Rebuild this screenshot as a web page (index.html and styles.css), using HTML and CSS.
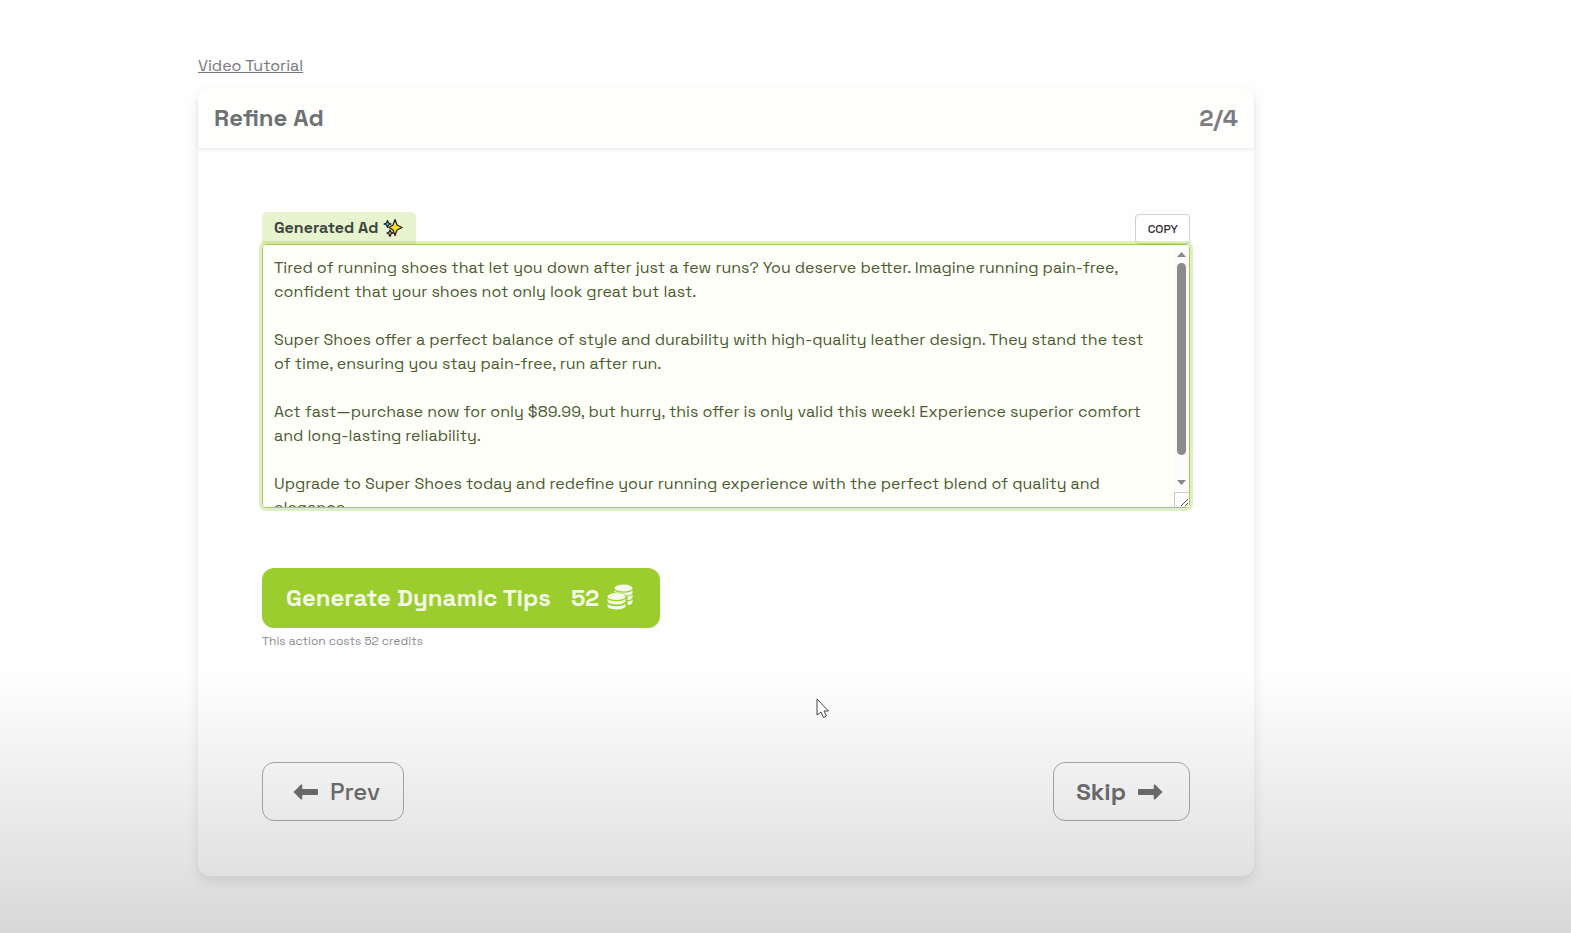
FILE: index.html
```
<!DOCTYPE html>
<html lang="en">
<head>
  <meta charset="UTF-8">
  <title>Refine Ad</title>
  <link rel="stylesheet" href="styles.css">
</head>
<body>
  <main class="page">
    <a href="#" class="tutorial-link">Video Tutorial</a>

    <section class="card">
      <header class="card-header">
        <h1>Refine Ad</h1>
        <span class="step">2/4</span>
      </header>

      <div class="card-body">
        <div class="field-top">
          <label for="generatedAd" class="field-label">
            Generated Ad
            <svg class="sparkles" viewBox="0 0 20 20" aria-hidden="true">
              <g stroke="#1c1c1c" stroke-width="1.2" stroke-linejoin="round">
                <path fill="#5fc8e8" d="M4.500 2.500l1 2.500 2.500 1-2.500 1-1 2.500-1-2.500-2.500-1 2.500-1z"/>
                <path fill="#e58fb5" d="M7 12l1 2 2 1-2 1-1 2.500-1-2.500-2-1 2-1z"/>
                <path fill="#ffe01b" d="M12 1.500l2 5.500 5 2.500-5 2.500-2 5.500-2-5.500-4-2.500 4-2.500z"/>
              </g>
            </svg>
          </label>
          <button type="button" class="copy-btn">COPY</button>
        </div>
        <div class="ad-box">
          <textarea id="generatedAd" class="ad-text" spellcheck="false">Tired of running shoes that let you down after just a few runs? You deserve better. Imagine running pain-free, confident that your shoes not only look great but last.

Super Shoes offer a perfect balance of style and durability with high-quality leather design. They stand the test of time, ensuring you stay pain-free, run after run.

Act fast—purchase now for only $89.99, but hurry, this offer is only valid this week! Experience superior comfort and long-lasting reliability.

Upgrade to Super Shoes today and redefine your running experience with the perfect blend of quality and elegance.
</textarea>
          <div class="scrollbar" aria-hidden="true">
            <svg class="scroll-arrow" viewBox="0 0 9 5"><path fill="#888" d="M0 5L4.500 0L9 5z"/></svg>
            <div class="scroll-track"><div class="scroll-thumb"></div></div>
            <svg class="scroll-arrow" viewBox="0 0 9 5"><path fill="#888" d="M0 0L4.500 5L9 0z"/></svg>
          </div>
        </div>

        <button type="button" class="generate-btn">
          <span>Generate Dynamic Tips</span>
          <span class="cost">52
            <svg class="coins" viewBox="0 0 26 26" aria-hidden="true">
              <g fill="currentColor">
                <ellipse cx="16.500" cy="4" rx="9" ry="3.600"/>
                <path d="M7.500 6.500c4 3 14 3 18 0v2c0 2-3 3-6 3-2-2-6-3-11-3-1 0-1-1-1-2z"/>
                <path d="M20.500 12.500c2 0 4-1 5-2v2.500c0 2-2 3-5 3zM20.500 17.500c2 0 4-1 5-2v2.500c0 2-2 3-5 3z"/>
                <ellipse cx="9.500" cy="12.500" rx="9" ry="3.600"/>
                <path d="M0.500 15c4 3 14 3 18 0v2c0 4.500-18 4.500-18 0zM0.500 20c4 3 14 3 18 0v2c0 4.500-18 4.500-18 0z"/>
              </g>
            </svg>
          </span>
        </button>
        <p class="hint">This action costs 52 credits</p>

        <div class="card-actions">
          <button type="button" class="nav-btn prev-btn">
            <svg class="arrow" viewBox="0 0 26 16" aria-hidden="true"><path fill="currentColor" d="M0.500 8L8 0.600Q9.300 0 9.300 1.500V5H23.500Q25 5 25 6.300V9.700Q25 11 23.500 11H9.300V14.500Q9.300 16 8 15.400Z"/></svg>
            Prev
          </button>
          <button type="button" class="nav-btn skip-btn">
            Skip
            <svg class="arrow" viewBox="0 0 26 16" aria-hidden="true"><path fill="currentColor" d="M25.500 8L18 0.600Q16.700 0 16.700 1.500V5H2.500Q1 5 1 6.300V9.700Q1 11 2.500 11H16.700V14.500Q16.700 16 18 15.400Z"/></svg>
          </button>
        </div>
      </div>
    </section>
  </main>

  <div class="bottom-fade"></div>
  <svg class="cursor" viewBox="0 0 14 21" aria-hidden="true">
    <path fill="#fff" stroke="#444" stroke-linejoin="round" d="M1 1v16l4-3 2.500 5.500 3-1.500-2.500-5h4.500z"/>
  </svg>
</body>
</html>
```
FILE: styles.css
```
* { box-sizing: border-box; }
body { margin: 0; min-height: 100vh; background-color: #fefefe; color: #707074; font-family: "Space Grotesk", Inter, "Liberation Sans", sans-serif; font-size: 16px; line-height: 24px; }
button { font-family: inherit; cursor: pointer; }

.page { padding: 54px 317px 56px 198px; }
.tutorial-link { display: inline-block; margin-bottom: 10px; color: #77777a; text-decoration: underline; }

.card { border-radius: 12px; background-color: #fefefe; box-shadow: 0 5px 12px rgba(0,0,0,0.1); }
.card-header { display: flex; justify-content: space-between; align-items: center; height: 60px; padding: 0 16px; border-radius: 12px 12px 0 0; background-color: #fefefc; box-shadow: 0 2px 3px rgba(0,0,0,0.07); font-size: 24px; }
.card-header h1 { margin: 0; font-size: 24px; font-weight: 600; }
.step { font-weight: 600; color: #7b7b80; }
.card-body { padding: 64px 64px 55px; }

.field-top { display: flex; justify-content: space-between; align-items: flex-end; }
.field-label { display: flex; align-items: center; gap: 5px; height: 32px; padding: 0 13px 0 12px; border-radius: 5px 5px 0 0; background-color: #e8f3cf; color: #3d4640; font-weight: 600; }
.sparkles { width: 20px; height: 20px; }
.copy-btn { height: 30px; padding: 0 11px 0 12px; border: 1px solid #d0d0d4; border-radius: 4px; background-color: #fefefe; color: #333; font-size: 12px; font-weight: 500; }

.ad-box { position: relative; }
.ad-text {
  display: block;
  width: 100%;
  height: 264px;
  padding: 11px 26px 11px 11px;
  border: 1px solid #a3c95a;
  border-radius: 4px;
  outline: none;
  box-shadow: 0 0 0 3px rgba(154,205,50,0.3);
  background-color: #fefff9;
  color: #4b5a31;
  font: inherit;
  resize: both;
}
.ad-text::-webkit-resizer { border: 1px solid #ccc; border-width: 1px 0 0 1px; background: #fefefe url("data:image/svg+xml,%3Csvg xmlns='http://www.w3.org/2000/svg' width='14' height='14'%3E%3Cpath stroke='%23555' d='M6 13L13 6M10 13L13 10'/%3E%3C/svg%3E") no-repeat; }

/* lies over the right edge of the textarea */
.scrollbar { position: absolute; top: 1px; right: 1px; bottom: 16px; width: 15px; padding: 7px 0; display: flex; flex-direction: column; align-items: center; gap: 6px; border-radius: 0 3px 0 0; background-color: #fbfbfb; pointer-events: none; }
.scroll-arrow { flex: none; width: 9px; height: 5px; }
.scroll-track { flex: 1; width: 9px; }
.scroll-thumb { height: 91%; border-radius: 5px; background-color: #8b8b8b; }

.generate-btn { display: flex; align-items: center; gap: 20px; height: 60px; margin-top: 60px; padding: 0 27px 2px 24px; border: none; border-radius: 12px; background-color: #9bcd2e; color: #f4fae8; font-size: 24px; font-weight: 700; }
.cost { display: flex; align-items: center; gap: 8px; }
.coins { width: 26px; height: 26px; }
.hint { margin: 4px 0 0; color: #8c8c8f; font-size: 12px; line-height: 18px; }

.card-actions { display: flex; justify-content: space-between; margin-top: 112px; }
.nav-btn { display: flex; align-items: center; gap: 11px; height: 59px; border: 1px solid #adadad; border-radius: 12px; background-color: transparent; color: #707074; font-size: 24px; font-weight: 500; }
.prev-btn { padding: 0 23px 0 30px; }
.skip-btn { padding: 0 26px 0 22px; font-weight: 600; }
.arrow { width: 26px; height: 16px; }

/* darkens the lower part of the window */
.bottom-fade { position: fixed; left: 0; right: 0; bottom: 0; height: 260px; pointer-events: none; background-image: linear-gradient(rgba(0,0,0,0), rgba(0,0,0,0.045) 30%, rgba(0,0,0,0.11) 75%, rgba(0,0,0,0.15)); }
.cursor { position: absolute; left: 816px; top: 698px; width: 14px; height: 21px; pointer-events: none; }
```
